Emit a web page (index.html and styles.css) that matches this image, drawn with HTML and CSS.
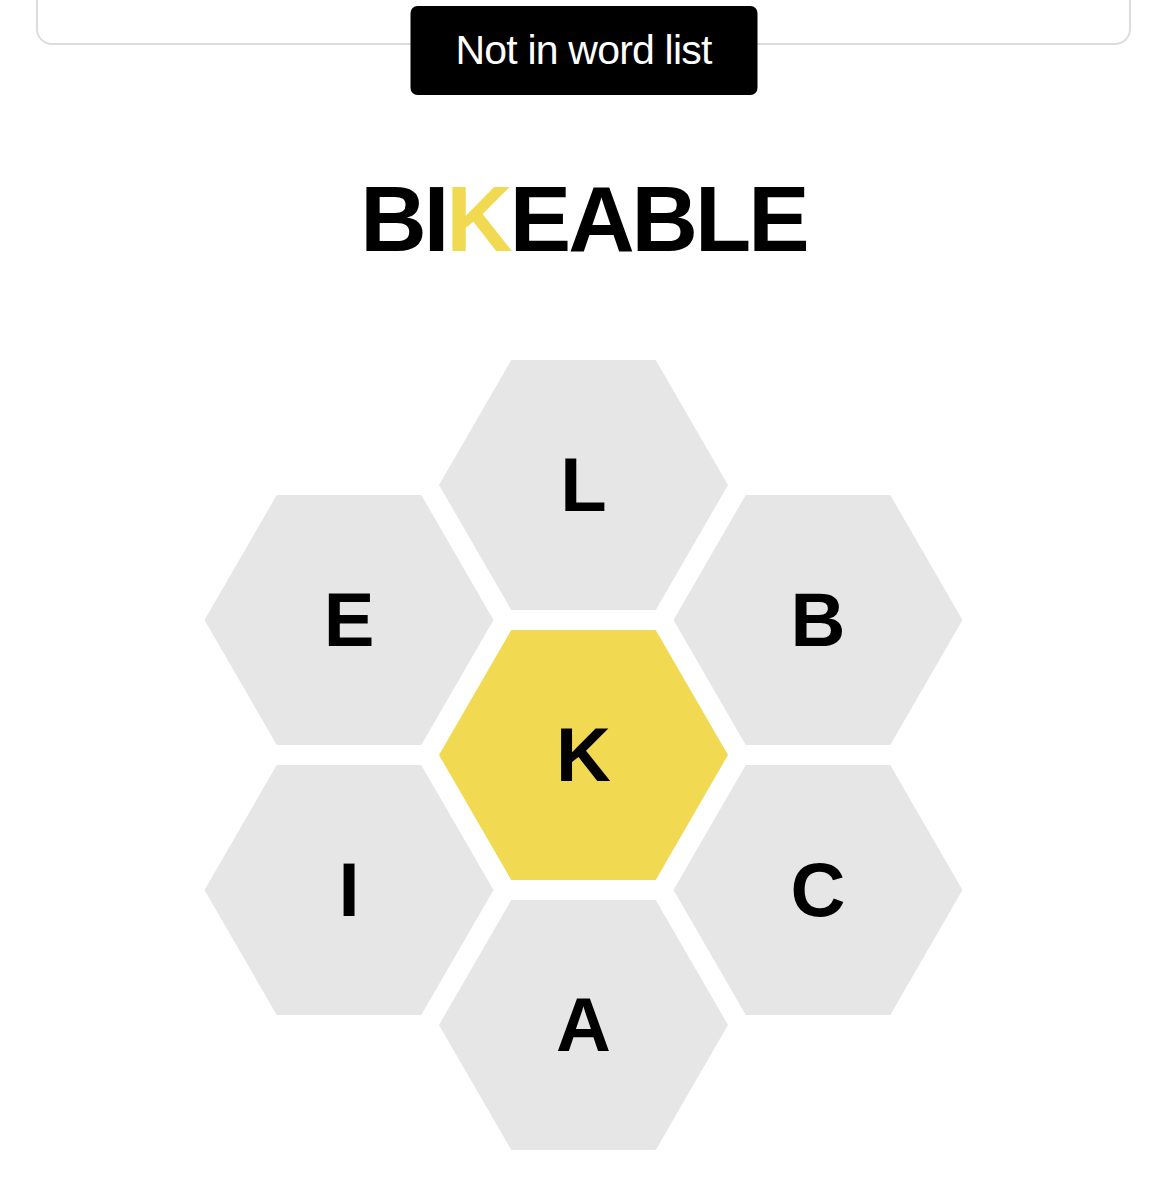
FILE: index.html
```html
<!DOCTYPE html>
<html lang="en">
<head>
  <meta charset="UTF-8">
  <meta name="viewport" content="width=device-width, initial-scale=1.0">
  <link rel="stylesheet" href="styles.css">
</head>
<body>

<div class="top-panel"></div>

<!-- message shown over the page -->
<div class="toast">Not in word list</div>

<div class="game">
  <div class="word">BI<span class="center-letter">K</span>EABLE</div>

  <div class="hive">
    <div class="cell cell-top"><span>L</span></div>
    <div class="cell cell-upper-left"><span>E</span></div>
    <div class="cell cell-upper-right"><span>B</span></div>
    <div class="cell cell-center"><span>K</span></div>
    <div class="cell cell-lower-left"><span>I</span></div>
    <div class="cell cell-lower-right"><span>C</span></div>
    <div class="cell cell-bottom"><span>A</span></div>
  </div>
</div>

</body>
</html>
```

FILE: styles.css
```css
body {
  margin: 0;
  background: #fff;
  font-family: "Liberation Sans", Arial, sans-serif;
  color: #000;
}

.top-panel {
  margin: 0 36px;
  height: 43px;
  border: 2px solid #dcdcdc;
  border-top: none;
  border-radius: 0 0 16px 16px;
}

.toast {
  position: absolute;
  top: 6px;
  left: 50%;
  transform: translateX(-50%);
  width: 347px;
  height: 89px;
  display: flex;
  align-items: center;
  justify-content: center;
  background: #000;
  color: #fff;
  border-radius: 7px;
  font-size: 41px;
  letter-spacing: -0.8px;
  z-index: 5;
}

.game {
  display: flex;
  flex-direction: column;
  align-items: center;
}

.word {
  margin-top: 128px;
  font-size: 92px;
  line-height: 1;
  font-weight: bold;
  letter-spacing: -3px;
}

.center-letter {
  color: #f1d951;
}

/* hive of seven hexagons */
.hive {
  position: relative;
  margin-top: 95px;
  width: 758px;
  height: 791px;
}

.cell {
  position: absolute;
  width: 289px;
  height: 250px;
  display: flex;
  align-items: center;
  justify-content: center;
  background: #e6e6e6;
  clip-path: polygon(25% 0, 75% 0, 100% 50%, 75% 100%, 25% 100%, 0 50%);
  font-size: 76px;
  line-height: 1;
  font-weight: bold;
}

.cell-top { left: 234.5px; top: 0; }
.cell-upper-left { left: 0; top: 135px; }
.cell-upper-right { left: 469px; top: 135px; }
.cell-center { left: 234.5px; top: 270px; background: #f1d951; }
.cell-lower-left { left: 0; top: 405px; }
.cell-lower-right { left: 469px; top: 405px; }
.cell-bottom { left: 234.5px; top: 540px; }
```
